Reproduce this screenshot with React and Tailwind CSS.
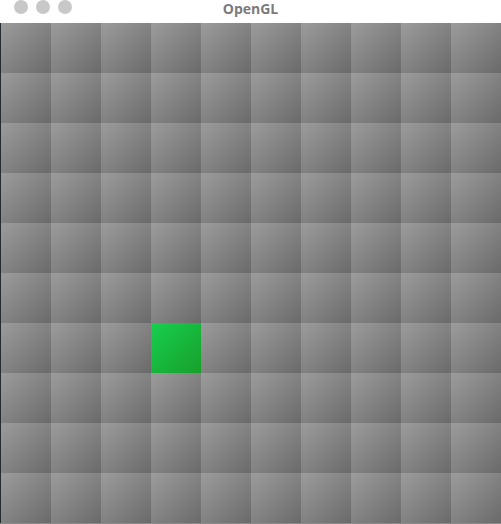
import React from 'react';

const ROWS = 10;
const COLS = 10;
const GREEN = { r: 6, c: 3 };

const Tile = ({ green }) => (
    <div
        className={
            green
                ? 'w-[50px] h-[50px] bg-gradient-to-br from-[#16cf4e] to-[#17a02a]'
                : 'w-[50px] h-[50px] bg-gradient-to-br from-[#9c9c9c] to-[#6a6a6a]'
        }
    />
);

const App = () => {
    const tiles = [];
    for (let r = 0; r < ROWS; r++) {
        for (let c = 0; c < COLS; c++) {
            tiles.push(<Tile key={r + '-' + c} green={r === GREEN.r && c === GREEN.c} />);
        }
    }

    return (
        <div className="w-[501px] h-[524px] flex flex-col bg-[#2b2f36] overflow-hidden">
            {/* title bar */}
            <div className="relative h-[23px] bg-white flex items-start justify-center shrink-0">
                <div className="absolute left-[14px] top-0 flex gap-[8px]">
                    <span className="w-[14px] h-[14px] rounded-full bg-[#c8c8c8]" />
                    <span className="w-[14px] h-[14px] rounded-full bg-[#c8c8c8]" />
                    <span className="w-[14px] h-[14px] rounded-full bg-[#c8c8c8]" />
                </div>
                <span className="text-[14px] font-bold text-[#7b7b7b] leading-[17px] font-['Open_Sans',sans-serif]">
                    OpenGL
                </span>
            </div>

            <div className="flex">
                <div className="w-[1px] h-[500px] bg-[#262a31]" />
                <div className="grid grid-cols-10 w-[500px] h-[500px]">{tiles}</div>
            </div>
            <div className="h-[1px] bg-[#8a8a8a]" />
        </div>
    );
};

export default App;
